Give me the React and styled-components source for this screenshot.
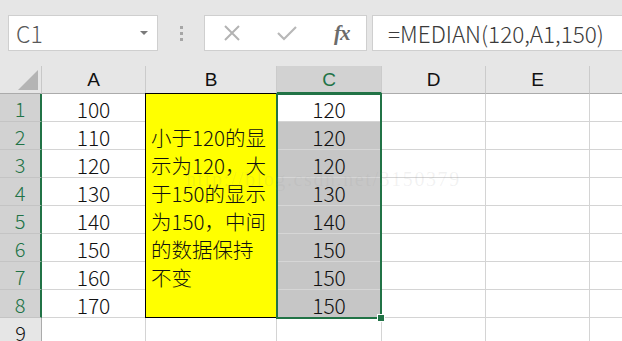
import styled, { createGlobalStyle } from "styled-components";

const GlobalStyle = createGlobalStyle`
  body {
    margin: 0;
    background: #e6e6e6;
    font-family: "Noto Sans CJK SC", "Noto Sans", sans-serif;
  }
`;

const Page = styled.div`
  width: 622px;
  height: 341px;
  overflow: hidden;
  background: #e6e6e6;
  display: flex;
  flex-direction: column;
`;

const Toolbar = styled.div`
  height: 66px;
  flex-shrink: 0;
  box-sizing: border-box;
  padding: 15px 0 0 8px;
  display: flex;
  align-items: flex-start;
`;

const Field = styled.div`
  height: 36px;
  box-sizing: border-box;
  background: #fff;
  border: 1px solid #cfcfcf;
  display: flex;
  align-items: center;
`;

const NameBox = styled(Field)`
  width: 150px;
  justify-content: space-between;
  padding: 0 9px 0 7px;
  font-size: 23px;
  font-weight: 300;
  color: #595959;
`;

const Arrow = styled.span`
  width: 0;
  height: 0;
  border-left: 4px solid transparent;
  border-right: 4px solid transparent;
  border-top: 4px solid #7a7a7a;
`;

const Grip = styled.div`
  width: 46px;
  height: 36px;
  display: flex;
  flex-direction: column;
  align-items: center;
  justify-content: center;
  gap: 3px;
`;

const Dot = styled.span`
  width: 3px;
  height: 3px;
  background: #a6a6a6;
`;

const FxBox = styled(Field)`
  width: 163px;
  padding-left: 19px;
`;

const IconSlot = styled.div`
  width: ${(p) => p.w}px;
  display: flex;
  justify-content: center;
  align-items: center;
`;

const Fx = styled.span`
  font-family: "Liberation Serif", "DejaVu Serif", serif;
  font-style: italic;
  font-weight: bold;
  font-size: 21px;
  color: #6b6b6b;
  letter-spacing: -1px;
`;

const FormulaBox = styled(Field)`
  flex: 1;
  margin-left: 5px;
  border-right: none;
  padding-left: 15px;
  font-size: 22.5px;
  font-weight: 300;
  color: #3a3a3a;
  white-space: nowrap;
`;

const Sheet = styled.div`
  position: relative;
  display: grid;
  grid-template-columns: 42px 104px 131px 105px 104px 104px 104px;
  grid-template-rows: repeat(10, 28px);
  background: #fff;
`;

const Corner = styled.div`
  grid-column: 1;
  grid-row: 1;
  background: #e6e6e6;
  border-bottom: 1px solid #ababab;
  border-right: 1px solid #c8c8c8;
  box-sizing: border-box;
  display: flex;
  align-items: flex-end;
  justify-content: flex-end;
  padding: 0 3px 3px 0;
`;

const ColHead = styled.div`
  grid-column: ${(p) => p.col};
  grid-row: 1;
  background: ${(p) => (p.active ? "#d2d2d2" : "#e6e6e6")};
  color: ${(p) => (p.active ? "#217346" : "#111")};
  border-bottom: ${(p) => (p.active ? "2px solid #217346" : "1px solid #ababab")};
  border-right: 1px solid #cbcbcb;
  box-sizing: border-box;
  display: flex;
  align-items: center;
  justify-content: center;
  font-family: "Liberation Sans", Arial, sans-serif;
  font-size: 19px;
  padding-top: ${(p) => (p.active ? "1px" : "0")};
`;

const RowHead = styled.div`
  grid-column: 1;
  grid-row: ${(p) => p.row};
  background: ${(p) => (p.active ? "#d2d2d2" : "#e6e6e6")};
  color: ${(p) => (p.active ? "#217346" : "#111")};
  border-right: ${(p) => (p.active ? "2px solid #217346" : "1px solid #ababab")};
  border-bottom: 1px solid #c4c4c4;
  box-sizing: border-box;
  display: flex;
  align-items: center;
  justify-content: center;
  font-size: 20px;
  font-weight: 300;
  padding-top: 2px;
`;

const Cell = styled.div`
  grid-column: ${(p) => p.col};
  grid-row: ${(p) => p.row};
  background: ${(p) => (p.selected ? "#c6c6c6" : "#fff")};
  border-right: 1px solid #d4d4d4;
  border-bottom: 1px solid ${(p) => (p.selected ? "#d6d6d6" : "#d4d4d4")};
  box-sizing: border-box;
  display: flex;
  align-items: center;
  justify-content: center;
  font-size: 21px;
  font-weight: 300;
  color: #111;
  padding-top: 3px;
`;

const Merged = styled.div`
  grid-column: 3;
  grid-row: 2 / 10;
  background: #ffff00;
  border: 1px solid #000;
  margin: -1px 0 0 -1px;
  box-sizing: border-box;
  display: flex;
  align-items: center;
  padding: 2px 0 0 5px;
  font-size: 20.5px;
  font-weight: 300;
  line-height: 28px;
  color: #111;
  z-index: 1;
`;

const Selection = styled.div`
  grid-column: 4;
  grid-row: 2 / 10;
  border: 2px solid #217346;
  margin: -1px 0 -1px -1px;
  position: relative;
  z-index: 2;
  pointer-events: none;
`;

const Handle = styled.span`
  position: absolute;
  right: -5px;
  bottom: -5px;
  width: 6px;
  height: 6px;
  background: #217346;
  border: 1px solid #fff;
`;

const Watermark = styled.div`
  position: absolute;
  left: 186px;
  top: 102px;
  font-family: "Liberation Serif", serif;
  font-size: 20px;
  letter-spacing: 1.6px;
  color: rgba(150, 150, 150, 0.13);
  z-index: 3;
  pointer-events: none;
`;

const colA = [100, 110, 120, 130, 140, 150, 160, 170];
const colC = [120, 120, 120, 130, 140, 150, 150, 150];
const heads = ["A", "B", "C", "D", "E", ""];

function App() {
  return (
    <Page>
      <GlobalStyle />
      <Toolbar>
        <NameBox>
          <span>C1</span>
          <Arrow />
        </NameBox>
        <Grip>
          <Dot />
          <Dot />
          <Dot />
        </Grip>
        <FxBox>
          <IconSlot w={16}>
            <svg width="16" height="16" viewBox="0 0 16 16">
              <path d="M1 1L15 15M15 1L1 15" stroke="#b3b3b3" strokeWidth="2" fill="none" />
            </svg>
          </IconSlot>
          <IconSlot w={94}>
            <svg width="20" height="16" viewBox="0 0 20 16">
              <path d="M1 8L7 14L19 2" stroke="#b8b8b8" strokeWidth="2.2" fill="none" />
            </svg>
          </IconSlot>
          <Fx>fx</Fx>
        </FxBox>
        <FormulaBox>=MEDIAN(120,A1,150)</FormulaBox>
      </Toolbar>
      <Sheet>
        <Corner>
          <svg width="20" height="20" viewBox="0 0 20 20">
            <path d="M20 0L20 20L0 20Z" fill="#b4b4b4" />
          </svg>
        </Corner>
        {heads.map((h, j) => (
          <ColHead key={j} col={j + 2} active={h === "C"}>
            {h}
          </ColHead>
        ))}
        {colA.map((a, i) => (
          <RowHead key={"r" + i} row={i + 2} active>
            {i + 1}
          </RowHead>
        ))}
        {colA.map((a, i) => (
          <Cell key={"a" + i} col={2} row={i + 2}>
            {a}
          </Cell>
        ))}
        {colC.map((c, i) => (
          <Cell key={"c" + i} col={4} row={i + 2} selected={i > 0}>
            {c}
          </Cell>
        ))}
        {[5, 6, 7].map((col) =>
          colA.map((a, i) => <Cell key={col + "-" + i} col={col} row={i + 2} />)
        )}
        <RowHead row={10}>9</RowHead>
        {[2, 3, 4, 5, 6, 7].map((col) => (
          <Cell key={"n" + col} col={col} row={10} />
        ))}
        <Merged>
          小于120的显<br />示为120，大<br />于150的显示<br />为150，中间<br />的数据保持<br />不变
        </Merged>
        <Selection>
          <Handle />
        </Selection>
        <Watermark>http://blog.csdn.net/3150379</Watermark>
      </Sheet>
    </Page>
  );
}

export default App;
